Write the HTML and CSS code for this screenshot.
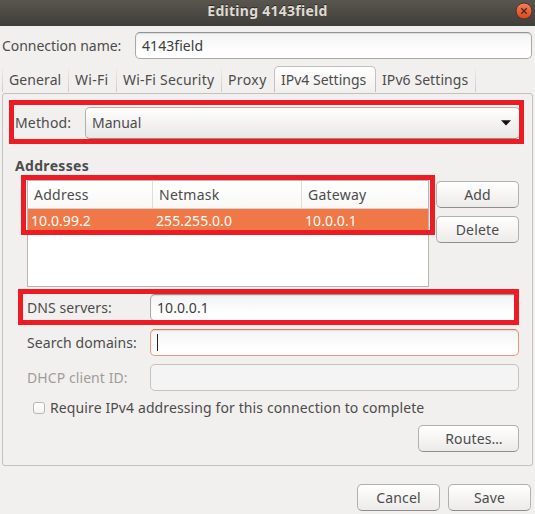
FILE: index.html
```html
<!DOCTYPE html>
<html lang="en">
<head>
<meta charset="utf-8">
<title>Editing 4143field</title>
<link rel="stylesheet" href="styles.css">
</head>
<body>
<div class="window">
  <header class="titlebar">
    <h1 class="title">Editing 4143field</h1>
    <button class="close" aria-label="Close"><svg width="18" height="18" viewBox="0 0 18 18"><defs><linearGradient id="g" x1="0" y1="0" x2="0" y2="1"><stop offset="0" stop-color="#f5805b"/><stop offset="1" stop-color="#dd4517"/></linearGradient></defs><circle cx="9" cy="9" r="8" fill="url(#g)" stroke="#49342b"/><path d="M6.3 6.3l5.4 5.4M11.7 6.3l-5.4 5.4" stroke="#4a291c" stroke-width="1.3"/></svg></button>
  </header>
  <div class="name-row">
    <span class="label connection">Connection name:</span>
    <div class="entry">4143field</div>
  </div>
  <nav class="tabs">
    <span class="tab general">General</span>
    <span class="tab wifi">Wi-Fi</span>
    <span class="tab security">Wi-Fi Security</span>
    <span class="tab proxy">Proxy</span>
    <span class="tab ipv4 active">IPv4 Settings</span>
    <span class="tab ipv6">IPv6 Settings</span>
  </nav>
  <main class="page">
    <div class="method-row">
      <span class="label">Method:</span>
      <div class="combo"><span>Manual</span><svg width="10" height="6" viewBox="0 0 10 6"><path d="M0 0.3h10L5 5.6z" fill="#111"/></svg></div>
      <div class="mark mark-method"></div>
    </div>
    <h2 class="heading">Addresses</h2>
    <div class="addresses">
      <div class="table">
        <div class="cells head"><span>Address</span><span>Netmask</span><span>Gateway</span></div>
        <div class="cells selected"><span>10.0.99.2</span><span>255.255.0.0</span><span>10.0.0.1</span></div>
      </div>
      <div class="actions">
        <button class="button">Add</button>
        <button class="button">Delete</button>
      </div>
      <div class="mark mark-table"></div>
    </div>
    <div class="fields">
      <div class="field"><span class="label dns">DNS servers:</span><div class="entry">10.0.0.1</div><div class="mark mark-dns"></div></div>
      <div class="field"><span class="label search">Search domains:</span><div class="entry focus"><i class="caret"></i></div></div>
      <div class="field disabled"><span class="label dhcp">DHCP client ID:</span><div class="entry"></div></div>
    </div>
    <div class="check-row"><i class="check"></i><span>Require IPv4 addressing for this connection to complete</span></div>
    <button class="button routes">Routes…</button>
  </main>
  <footer class="footer">
    <button class="button">Cancel</button>
    <button class="button">Save</button>
  </footer>
</div>
</body>
</html>
```
FILE: styles.css
```css
* { box-sizing: border-box; }
body { margin: 0; background: #f2f0ee; color: #4c4c4c; font: 14px/20px "Noto Sans", sans-serif; }
.window { width: 535px; height: 514px; overflow: hidden; }
.titlebar { position: relative; height: 26px; display: flex; justify-content: center; background: linear-gradient(#59564f, #3f3e39); }
.title { margin: 1px 0 0; font-size: 14px; line-height: 20px; font-weight: 700; letter-spacing: 0.27px; color: #dfdbd2; text-shadow: 0 -1px #2c2b28; }
.close { position: absolute; right: 2px; top: 2px; width: 18px; height: 18px; padding: 0; border: 0; background: none; }
.close svg { display: block; }
.name-row { display: flex; align-items: center; height: 27px; margin: 6px 3px 7px 2px; }
.connection { width: 133px; letter-spacing: -0.04px; }
.label { flex: none; white-space: nowrap; }
.entry { flex: 1; height: 27px; padding: 3px 6px; border: 1px solid #aaa8a5; border-top-color: #929292; border-radius: 5px; background: linear-gradient(#f3f3f3, #fff 75%); color: #3c3c3c; box-shadow: inset 0 1px 1px #ddd; letter-spacing: 0.06px; }
.tabs { display: flex; height: 27px; margin-left: 2px; }
.tab { flex: none; padding: 4px 0 0 6px; border-right: 1px solid; border-image: linear-gradient(#f2f0ee, #ccc9c6) 1; height: 26px; white-space: nowrap; }
.general { width: 67px; border-left: 1px solid; letter-spacing: 0.1px; }
.wifi { width: 48px; letter-spacing: 0.3px; }
.security { width: 105px; letter-spacing: 0.22px; }
.proxy { width: 52px; border: 0; letter-spacing: 0.4px; }
.ipv4 { width: 102px; }
.ipv6 { width: 100px; letter-spacing: 0.08px; }
.tab.active { padding-top: 3px; border: 1px solid #c3c0bd; border-bottom: 0; border-image: none; border-radius: 5px 5px 0 0; background: linear-gradient(#fff, #f2f0ee); }
.page { width: 531px; height: 373px; margin-left: 2px; border: 1px solid #c3c1be; border-radius: 3px; padding: 13px 13px 0 12px; }
.method-row { position: relative; display: flex; align-items: center; height: 32px; }
.method-row .label { width: 70px; letter-spacing: 0.15px; }
.combo { width: 435px; height: 32px; flex: none; display: flex; justify-content: space-between; align-items: center; padding: 0 8px 1px 6px; border: 1px solid #b2b0ad; border-bottom-color: #8f8e8c; border-radius: 5px; background: linear-gradient(#fff, #e9e7e5); }
.mark { position: absolute; border: 5px solid #ed1c24; pointer-events: none; }
.mark-method { left: -6px; top: -7px; width: 515px; height: 44px; }
.heading { margin: 17px 0 4px; font-size: 14px; line-height: 20px; font-weight: 700; letter-spacing: 0.32px; }
.addresses { position: relative; display: flex; justify-content: space-between; height: 107px; margin-left: 12px; }
.table { width: 402px; border: 1px solid #b9b7b4; background: #fff; }
.cells { display: grid; grid-template-columns: 125px 149px 1fr; height: 22px; line-height: 24px; letter-spacing: 0.06px; }
.cells span { padding-left: 3px; }
.cells.head { height: 28px; line-height: 27px; letter-spacing: 0.25px; background: linear-gradient(#fff, #f8f8f7); border-bottom: 1px solid #d5d3d1; }
.cells.head span { padding-left: 6px; border-right: 1px solid #dfdddb; }
.cells.head span:last-child { border: 0; }
.selected { background: #f07746; color: #fff; }
.mark-table { left: -6px; top: -5px; width: 414px; height: 60px; }
.actions { width: 83px; display: flex; flex-direction: column; gap: 8px; padding-top: 1px; }
.button { display: block; width: 83px; height: 27px; padding: 1px 0 0; font: inherit; color: inherit; letter-spacing: 0.15px; text-align: center; border: 1px solid #b2b0ad; border-bottom-color: #8f8e8c; border-radius: 5px; background: linear-gradient(#fff, #edebe9); }
.fields { display: flex; flex-direction: column; gap: 8px; margin: 7px 0 0 12px; }
.field { position: relative; display: flex; align-items: center; height: 27px; }
.field .label { width: 123px; letter-spacing: 0.08px; }
.mark-dns { left: -9px; top: -5px; width: 501px; height: 36px; }
.focus { border-color: #e79a7c; border-top-color: #dc8058; }
.caret { display: block; width: 1px; height: 17px; margin-top: 1px; background: #222; }
.disabled { color: #a09d99; }
.disabled .entry { border-color: #c5c3c0; background: #f4f4f4; box-shadow: none; }
.check-row { display: flex; align-items: center; gap: 5px; height: 20px; margin: 7px 0 0 18px; white-space: nowrap; letter-spacing: 0.11px; }
.check { width: 12px; height: 12px; border: 1px solid #b9b7b4; border-radius: 3px; background: linear-gradient(#fff, #f4f3f2); }
.routes { width: 101px; margin: 7px 0 0 auto; padding-left: 11px; }
.footer { display: flex; justify-content: flex-end; gap: 8px; margin: 18px 4px 0 0; }
```
